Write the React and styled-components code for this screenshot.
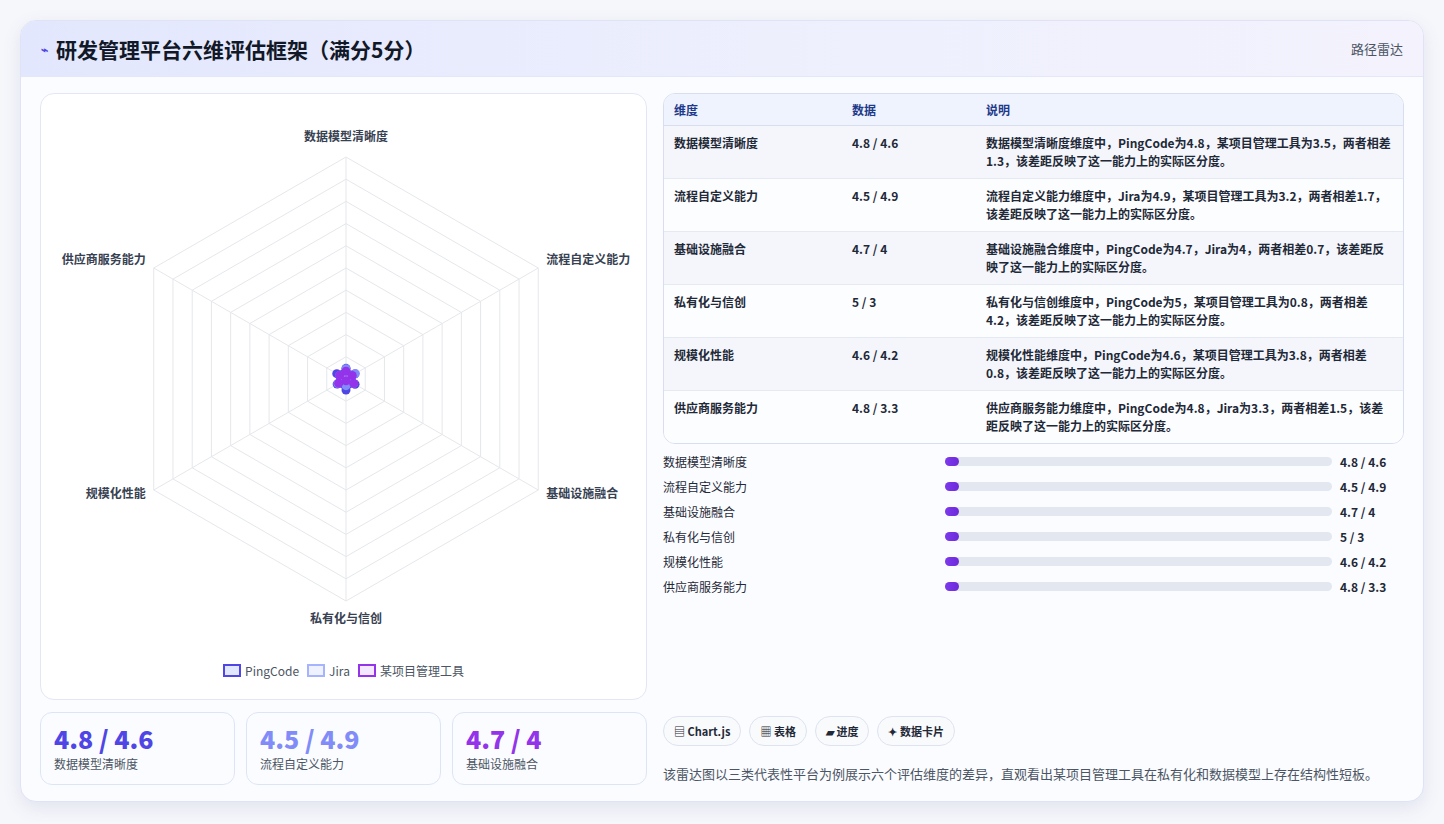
import React from "react";
import styled, { createGlobalStyle } from "styled-components";

const Global = createGlobalStyle`
  html,body{margin:0;background:#f6f7fb;}
  body{font-family:"Noto Sans CJK SC","Noto Sans",sans-serif;color:#1f2937;}
`;

const dims = [
  ["数据模型清晰度","4.8 / 4.6","数据模型清晰度维度中，PingCode为4.8，某项目管理工具为3.5，两者相差1.3，该差距反映了这一能力上的实际区分度。"],
  ["流程自定义能力","4.5 / 4.9","流程自定义能力维度中，Jira为4.9，某项目管理工具为3.2，两者相差1.7，该差距反映了这一能力上的实际区分度。"],
  ["基础设施融合","4.7 / 4","基础设施融合维度中，PingCode为4.7，Jira为4，两者相差0.7，该差距反映了这一能力上的实际区分度。"],
  ["私有化与信创","5 / 3","私有化与信创维度中，PingCode为5，某项目管理工具为0.8，两者相差4.2，该差距反映了这一能力上的实际区分度。"],
  ["规模化性能","4.6 / 4.2","规模化性能维度中，PingCode为4.6，某项目管理工具为3.8，两者相差0.8，该差距反映了这一能力上的实际区分度。"],
  ["供应商服务能力","4.8 / 3.3","供应商服务能力维度中，PingCode为4.8，Jira为3.3，两者相差1.5，该差距反映了这一能力上的实际区分度。"],
];
const series = [
  { color:"#4f46e5", fill:"rgba(79,70,229,0.25)", v:[4.8,4.5,4.7,5,4.6,4.8] },
  { color:"#818cf8", fill:"rgba(129,140,248,0.2)", v:[4.6,4.9,4,3,4.2,3.3] },
  { color:"#9333ea", fill:"rgba(147,51,234,0.2)", v:[3.5,3.2,4,0.8,3.8,3.3] },
];

const Page = styled.div`padding:20px;`;
const Card = styled.div`
  background:#fbfcff;border:1px solid #dfe3f5;border-radius:16px;overflow:hidden;
  box-shadow:0 6px 18px rgba(80,90,160,0.12);height:780px;display:flex;flex-direction:column;
`;
const Header = styled.div`
  height:55px;flex:none;display:flex;align-items:center;justify-content:space-between;padding:0 20px;
  background:linear-gradient(90deg,#e3e7fd,#eef0fd 60%,#f3f2fd);border-bottom:1px solid #e3e7f7;
`;
const Title = styled.h1`margin:0;font-size:21px;font-weight:700;color:#111827;display:flex;align-items:center;gap:8px;`;
const Tag = styled.span`font-size:13px;color:#4b5563;`;
const Body = styled.div`flex:1;display:grid;grid-template-columns:607px 1fr;gap:16px;padding:16px 19px 18px 19px;`;
const Col = styled.div`display:flex;flex-direction:column;gap:12px;min-height:0;`;
const ChartCard = styled.div`
  height:605px;background:#fff;border:1px solid #e3e7f3;border-radius:14px;position:relative;
  display:flex;flex-direction:column;align-items:center;
`;
const Legend = styled.div`display:flex;gap:8px;font-size:12px;color:#4b5563;position:absolute;bottom:20px;`;
const LegItem = styled.span`display:flex;align-items:center;gap:4px;`;
const Swatch = styled.span`width:18px;height:13px;border:2px solid ${p=>p.c};background:${p=>p.f};box-sizing:border-box;`;
const Stats = styled.div`display:grid;grid-template-columns:repeat(3,1fr);gap:11px;`;
const Stat = styled.div`
  height:73px;box-sizing:border-box;border:1px solid #dde5f5;border-radius:12px;background:#fbfcff;padding:10px 13px;
`;
const StatNum = styled.div`font-size:25px;font-weight:800;color:${p=>p.c};line-height:30px;`;
const StatLbl = styled.div`font-size:12px;color:#4b5563;margin-top:2px;`;
const Table = styled.table`
  width:100%;border-collapse:separate;border-spacing:0;border:1px solid #d8deef;border-radius:12px;overflow:hidden;font-size:12px;
  th{background:#eef3fd;color:#1e3a8a;text-align:left;font-weight:700;height:31px;padding:0 10px;border-bottom:1px solid #d8deef;}
  td{vertical-align:top;padding:8px 10px 8px;font-weight:600;color:#1f2937;line-height:18px;border-bottom:1px solid #e5e9f3;height:36px;}
  tr:nth-child(odd) td{background:#f4f6fc;}
  tr:nth-child(even) td{background:#fcfdff;}
  tr:last-child td{border-bottom:none;}
`;
const Bars = styled.div`display:flex;flex-direction:column;gap:6px;margin-top:-4px;`;
const BarRow = styled.div`display:grid;grid-template-columns:282px 1fr 64px;align-items:center;font-size:12px;height:19px;`;
const Track = styled.div`height:9px;border-radius:5px;background:#e2e7f0;position:relative;margin-right:8px;`;
const Fill = styled.div`position:absolute;left:0;top:0;height:9px;border-radius:5px;background:linear-gradient(90deg,#7c3aed,#6d28d9);`;
const Val = styled.span`font-weight:700;`;
const Spacer = styled.div`flex:1;`;
const Chips = styled.div`display:flex;gap:8px;margin-bottom:2px;`;
const Chip = styled.span`font-size:11px;font-weight:700;border:1px solid #dde3f0;border-radius:16px;padding:6px 10px;background:#f9fafc;color:#1f2937;`;
const Caption = styled.p`margin:4px 0 2px;font-size:13px;color:#4b5563;`;

function Radar(){
  const cx=302, cy=285, R=222;
  const ang=i=>(-90+i*60)*Math.PI/180;
  const pt=(i,r)=>[cx+r*Math.cos(ang(i)),cy+r*Math.sin(ang(i))];
  const rings=[...Array(10)].map((_,k)=>R*(k+1)/10);
  const labels=[["数据模型清晰度",0,-16,"middle"],["流程自定义能力",8,-4,"start"],["基础设施融合",8,8,"start"],["私有化与信创",0,22,"middle"],["规模化性能",-8,8,"end"],["供应商服务能力",-8,-4,"end"]];
  const scale=r=>r/100*R;
  return (
    <svg width="600" height="560" style={{marginTop:0}}>
      {rings.map((r,k)=><polygon key={k} points={[0,1,2,3,4,5].map(i=>pt(i,r).join(",")).join(" ")} fill="none" stroke="#e5e7eb"/>)}
      {[0,1,2,3,4,5].map(i=><line key={i} x1={cx} y1={cy} x2={pt(i,R)[0]} y2={pt(i,R)[1]} stroke="#e5e7eb"/>)}
      {labels.map(([t,dx,dy,a],i)=>{const [x,y]=pt(i,R);return <text key={i} x={x+dx} y={y+dy} textAnchor={a} fontSize="12" fontWeight="600" fill="#374151" fontFamily="Noto Sans CJK SC">{t}</text>;})}
      {series.map((s,si)=>(
        <g key={si}>
          <polygon points={s.v.map((v,i)=>pt(i,scale(v)).join(",")).join(" ")} fill={s.fill} stroke={s.color} strokeWidth="2"/>
          {s.v.map((v,i)=>{const [x,y]=pt(i,scale(v));return <circle key={i} cx={x} cy={y} r="4.5" fill={s.color}/>;})}
        </g>
      ))}
    </svg>
  );
}

export default function App(){
  return (
    <Page>
      <Global/>
      <Card>
        <Header>
          <Title><span style={{fontSize:12,color:"#4f46e5"}}>⌁</span>研发管理平台六维评估框架（满分5分）</Title>
          <Tag>路径雷达</Tag>
        </Header>
        <Body>
          <Col>
            <ChartCard>
              <Radar/>
              <Legend>
                <LegItem><Swatch c="#4f46e5" f="#e0e7ff"/>PingCode</LegItem>
                <LegItem><Swatch c="#a5b4fc" f="#eef2ff"/>Jira</LegItem>
                <LegItem><Swatch c="#9333ea" f="#f3e8ff"/>某项目管理工具</LegItem>
              </Legend>
            </ChartCard>
            <Stats>
              <Stat><StatNum c="#4f46e5">4.8 / 4.6</StatNum><StatLbl>数据模型清晰度</StatLbl></Stat>
              <Stat><StatNum c="#818cf8">4.5 / 4.9</StatNum><StatLbl>流程自定义能力</StatLbl></Stat>
              <Stat><StatNum c="#9333ea">4.7 / 4</StatNum><StatLbl>基础设施融合</StatLbl></Stat>
            </Stats>
          </Col>
          <Col>
            <Table>
              <colgroup><col style={{width:178}}/><col style={{width:134}}/><col/></colgroup>
              <thead><tr><th>维度</th><th>数据</th><th>说明</th></tr></thead>
              <tbody>{dims.map(d=><tr key={d[0]}><td>{d[0]}</td><td>{d[1]}</td><td>{d[2]}</td></tr>)}</tbody>
            </Table>
            <Bars>
              {dims.map(d=><BarRow key={d[0]}><span>{d[0]}</span><Track><Fill style={{width:14}}/></Track><Val>{d[1]}</Val></BarRow>)}
            </Bars>
            <Spacer/>
            <Chips><Chip>▤ Chart.js</Chip><Chip>▦ 表格</Chip><Chip>▰ 进度</Chip><Chip>✦ 数据卡片</Chip></Chips>
            <Caption>该雷达图以三类代表性平台为例展示六个评估维度的差异，直观看出某项目管理工具在私有化和数据模型上存在结构性短板。</Caption>
          </Col>
        </Body>
      </Card>
    </Page>
  );
}
